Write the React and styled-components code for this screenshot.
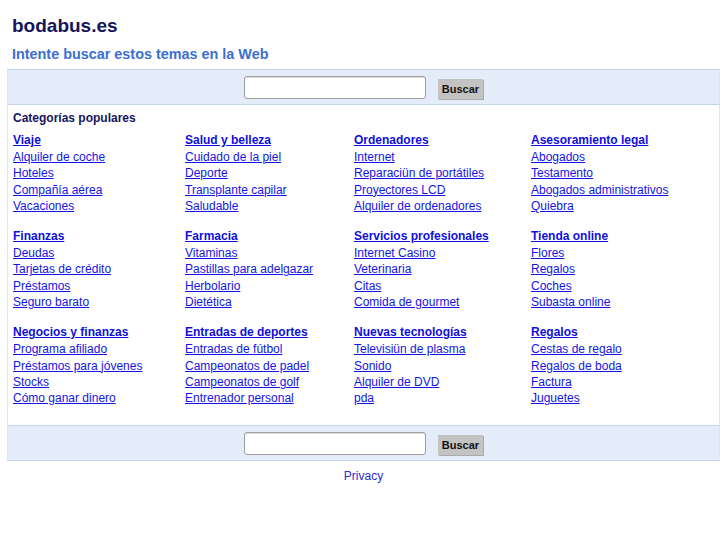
import styled, { createGlobalStyle } from "styled-components";

const GlobalStyle = createGlobalStyle`
  body {
    margin: 0;
    background: #ffffff;
    font-family: "Liberation Sans", Arial, sans-serif;
  }
`;

const Page = styled.div`
  padding: 0 7px;
`;

const Header = styled.div`
  padding: 14px 5px 0 5px;
`;

const Title = styled.h1`
  margin: 0;
  font-size: 19px;
  line-height: 24px;
  font-weight: bold;
  color: #15155e;
`;

const Subtitle = styled.h2`
  margin: 7px 0 0 0;
  font-size: 14.4px;
  line-height: 18px;
  font-weight: bold;
  color: #3a6fd0;
`;

const SearchBar = styled.form`
  display: flex;
  justify-content: center;
  align-items: flex-start;
  gap: 12px;
  height: 36px;
  box-sizing: border-box;
  margin-top: ${(p) => (p.$top ? "6px" : "0")};
  padding-top: 6px;
  background: #e5ecf9;
  border-top: 1px solid #c5d5f0;
  border-bottom: 1px solid #c5d5f0;
  border-left: 1px solid #dde6f6;
  border-right: 1px solid #dde6f6;
`;

const SearchInput = styled.input`
  width: 182px;
  height: 23px;
  box-sizing: border-box;
  border: 1px solid #a0a0a0;
  border-radius: 3px;
  background: #ffffff;
  box-shadow: inset 0 1px 1px rgba(0, 0, 0, 0.15);
  padding: 2px 4px;
`;

const SearchButton = styled.button`
  margin-top: 3px;
  width: 45px;
  height: 20px;
  padding: 0;
  border: none;
  background: #c3c3c3;
  box-shadow: 1px 1px 0 #aaaaaa;
  font-family: "Liberation Sans", Arial, sans-serif;
  font-size: 11px;
  font-weight: bold;
  color: #111111;
`;

const Content = styled.div`
  padding: 5px 0 18px 5px;
  border-left: 1px solid #dde6f6;
  border-right: 1px solid #dde6f6;
`;

const SectionTitle = styled.div`
  font-size: 12px;
  line-height: 16px;
  font-weight: bold;
  color: #15155e;
  margin-bottom: 6px;
`;

const Grid = styled.div`
  display: grid;
  grid-template-columns: 172px 169px 177px 1fr;
  row-gap: 14px;
`;

const Group = styled.div`
  display: flex;
  flex-direction: column;
`;

const GroupHead = styled.a`
  font-size: 12px;
  line-height: 17px;
  font-weight: bold;
  color: #0f0fdd;
  text-decoration: underline;
  align-self: flex-start;
`;

const Item = styled.a`
  font-size: 12px;
  line-height: 16.3px;
  color: #1414e6;
  text-decoration: underline;
  align-self: flex-start;
`;

const Footer = styled.div`
  text-align: center;
  padding-top: 5px;
`;

const FooterLink = styled.a`
  font-size: 12px;
  line-height: 16px;
  color: #2a2ad8;
  text-decoration: none;
`;

const groups = [
  ["Viaje", ["Alquiler de coche", "Hoteles", "Compañía aérea", "Vacaciones"]],
  ["Salud y belleza", ["Cuidado de la piel", "Deporte", "Transplante capilar", "Saludable"]],
  ["Ordenadores", ["Internet", "Reparaciün de portátiles", "Proyectores LCD", "Alquiler de ordenadores"]],
  ["Asesoramiento legal", ["Abogados", "Testamento", "Abogados administrativos", "Quiebra"]],
  ["Finanzas", ["Deudas", "Tarjetas de crédito", "Préstamos", "Seguro barato"]],
  ["Farmacia", ["Vitaminas", "Pastillas para adelgazar", "Herbolario", "Dietética"]],
  ["Servicios profesionales", ["Internet Casino", "Veterinaria", "Citas", "Comida de gourmet"]],
  ["Tienda online", ["Flores", "Regalos", "Coches", "Subasta online"]],
  ["Negocios y finanzas", ["Programa afiliado", "Préstamos para jóvenes", "Stocks", "Cómo ganar dinero"]],
  ["Entradas de deportes", ["Entradas de fútbol", "Campeonatos de padel", "Campeonatos de golf", "Entrenador personal"]],
  ["Nuevas tecnologías", ["Televisiün de plasma", "Sonido", "Alquiler de DVD", "pda"]],
  ["Regalos", ["Cestas de regalo", "Regalos de boda", "Factura", "Juguetes"]],
];

function Search({ top }) {
  return (
    <SearchBar $top={top} onSubmit={(e) => e.preventDefault()}>
      <SearchInput type="text" />
      <SearchButton type="submit">Buscar</SearchButton>
    </SearchBar>
  );
}

export default function App() {
  return (
    <Page>
      <GlobalStyle />
      <Header>
        <Title>bodabus.es</Title>
        <Subtitle>Intente buscar estos temas en la Web</Subtitle>
      </Header>
      <Search top />
      <Content>
        <SectionTitle>Categorías populares</SectionTitle>
        <Grid>
          {groups.map(([head, items]) => (
            <Group key={head}>
              <GroupHead href="#">{head}</GroupHead>
              {items.map((item) => (
                <Item key={item} href="#">
                  {item}
                </Item>
              ))}
            </Group>
          ))}
        </Grid>
      </Content>
      <Search />
      <Footer>
        <FooterLink href="#">Privacy</FooterLink>
      </Footer>
    </Page>
  );
}
